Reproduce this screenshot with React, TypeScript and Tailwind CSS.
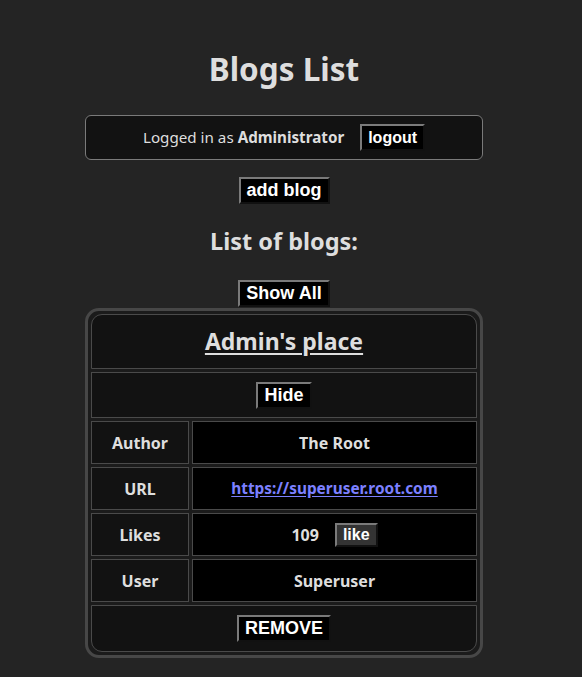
const btn =
  "bg-black text-white font-bold px-[6px] py-px border-2 border-t-[#7a7a7a] border-l-[#7a7a7a] border-b-[#111] border-r-[#111] leading-[21px]"

function Row({ label, children }: { label: string; children: React.ReactNode }) {
  return (
    <tr>
      <td className="h-[43px] w-[98px] border border-[#4a4a4a] bg-[#121212] text-center font-bold">{label}</td>
      <td className="h-[43px] border border-[#4a4a4a] bg-black text-center font-bold">{children}</td>
    </tr>
  )
}

export default function App() {
  return (
    <div className="min-h-screen w-full bg-[#242424] text-[#dedede] font-['Noto_Sans',sans-serif]">
      <div className="w-[568px] flex flex-col items-center pb-6">
        <h1 className="mt-[50px] text-[31.5px] leading-[38px] font-bold">Blogs List</h1>

        {/* logged in box */}
        <div className="mt-[27px] w-[398px] h-[45px] rounded-md border border-[#7a7a7a] bg-[#121212] flex items-center justify-center gap-4 text-[15.2px]">
          <span className="-mt-px">
            Logged in as <b>Administrator</b>
          </span>
          <button className={`${btn} text-base leading-[18px] font-['Liberation_Sans',sans-serif]`}>logout</button>
        </div>

        <button className={`${btn} mt-[17px] text-[18px] font-['Liberation_Sans',sans-serif]`}>add blog</button>

        <h2 className="mt-[22px] text-[23.5px] leading-[30px] font-bold">List of blogs:</h2>

        <button className={`${btn} mt-[24px] text-[18px] font-['Liberation_Sans',sans-serif]`}>Show All</button>

        {/* blog table */}
        <table className="mt-px w-[398px] border-separate border-spacing-[3px] border-[3px] border-[#474747] rounded-[14px] bg-[#1b1b1b]">
          <tbody>
            <tr>
              <td colSpan={2} className="h-[55px] border border-[#4a4a4a] bg-[#121212] rounded-t-[11px] text-center">
                <a href="#" className="text-[23px] font-bold underline underline-offset-[3px] text-[#dedede]">
                  Admin's place
                </a>
              </td>
            </tr>
            <tr>
              <td colSpan={2} className="h-[46px] border border-[#4a4a4a] bg-[#121212] text-center">
                <button className={`${btn} text-[18px] font-['Liberation_Sans',sans-serif]`}>Hide</button>
              </td>
            </tr>
            <Row label="Author">The Root</Row>
            <Row label="URL">
              <a href="#" className="text-[15.4px] text-[#7c80ff] underline underline-offset-2">https://superuser.root.com</a>
            </Row>
            <Row label="Likes">
              <span className="inline-flex items-center gap-4">
                109
                <button className="bg-[#333] text-white font-bold px-[6px] py-px border-2 border-t-[#7a7a7a] border-l-[#7a7a7a] border-b-[#111] border-r-[#111] text-base leading-[18px] font-['Liberation_Sans',sans-serif]">
                  like
                </button>
              </span>
            </Row>
            <Row label="User">Superuser</Row>
            <tr>
              <td colSpan={2} className="h-[47px] border border-[#4a4a4a] bg-[#121212] rounded-b-[11px] text-center">
                <button className={`${btn} text-[18px] font-['Liberation_Sans',sans-serif]`}>REMOVE</button>
              </td>
            </tr>
          </tbody>
        </table>
      </div>
    </div>
  )
}
